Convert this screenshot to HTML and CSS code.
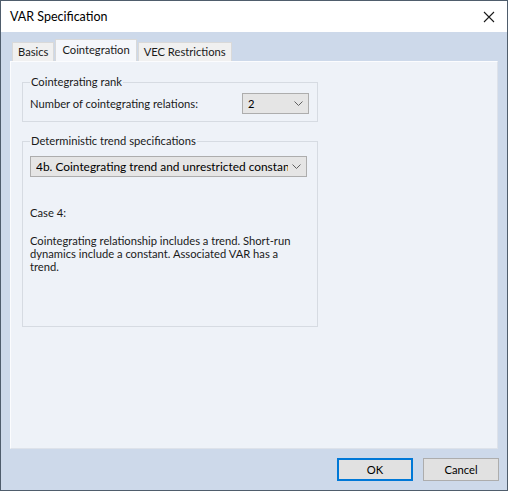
FILE: index.html
```html
<!DOCTYPE html>
<html>
<head>
<meta charset="utf-8">
<link rel="stylesheet" href="styles.css">
</head>
<body>
<div class="window">
  <div class="titlebar">
    <span class="title">VAR Specification</span>
    <svg class="close" width="12" height="12" viewBox="0 0 12 12"><path d="M1 1 L11 11 M11 1 L1 11" stroke="#1a1a1a" stroke-width="1.1" fill="none"/></svg>
  </div>
  <div class="client">
    <div class="tabs">
      <div class="tab">Basics</div>
      <div class="tab active">Cointegration</div>
      <div class="tab">VEC Restrictions</div>
    </div>
    <div class="panel">
      <fieldset class="group rank">
        <legend>Cointegrating rank</legend>
        <div class="row">
          <span>Number of cointegrating relations:</span>
          <div class="combo small"><span class="val">2</span><svg class="chev" width="9" height="5" viewBox="0 0 9 5"><path d="M0.5 0.5 L4.5 4.5 L8.5 0.5" stroke="#606060" fill="none"/></svg></div>
        </div>
      </fieldset>
      <fieldset class="group trend">
        <legend>Deterministic trend specifications</legend>
        <div class="combo wide"><span class="val">4b. Cointegrating trend and unrestricted constant</span><svg class="chev" width="9" height="5" viewBox="0 0 9 5"><path d="M0.5 0.5 L4.5 4.5 L8.5 0.5" stroke="#606060" fill="none"/></svg></div>
        <p class="case">Case 4:</p>
        <p class="desc">Cointegrating relationship includes a trend. Short-run dynamics include a constant. Associated VAR has a trend.</p>
      </fieldset>
    </div>
    <div class="buttons">
      <div class="btn default">OK</div>
      <div class="btn">Cancel</div>
    </div>
  </div>
</div>
</body>
</html>
```

FILE: styles.css
```css
html, body {
  margin: 0;
  padding: 0;
}
body {
  width: 508px;
  height: 491px;
  font-family: Lato, "Noto Sans", sans-serif;
  font-size: 11.2px;
  color: #1a1a1a;
}
.window {
  box-sizing: border-box;
  width: 508px;
  height: 491px;
  border: 1px solid #4f5d6c;
  display: flex;
  flex-direction: column;
  background: #cdd9ea;
}
.titlebar {
  height: 31px;
  background: #fff;
  display: flex;
  align-items: center;
  justify-content: space-between;
  padding: 0 12px 0 9px;
  flex: none;
}
.title {
  font-size: 12.5px;
  color: #000;
}
.close {
  display: block;
}
.client {
  flex: 1;
  display: flex;
  flex-direction: column;
  padding: 7px 9px 8px 9px;
}
.tabs {
  display: flex;
  align-items: flex-end;
  height: 22px;
  padding-left: 2px;
}
.tab {
  box-sizing: border-box;
  height: 19px;
  padding: 0 5px;
  line-height: 17px;
  background: #f0f0f0;
  border: 1px solid #d9d9d9;
  border-bottom: none;
  margin-right: 1px;
}
.tab.active {
  height: 22px;
  background: #f5f7fb;
  padding: 0 6px;
  line-height: 20px;
  position: relative;
  z-index: 1;
}
.panel {
  box-sizing: border-box;
  height: 388px;
  background: #eef2f8;
  border: 1px solid #fbfcfe;
  border-bottom-color: #dde2ea;
  border-right-color: #dde2ea;
  padding: 13px 11px;
  display: flex;
  flex-direction: column;
}
.group {
  margin: 0;
  width: 296px;
  box-sizing: border-box;
  border: 1px solid #d6dbe2;
  border-radius: 0;
  min-width: 0;
}
.group legend {
  padding: 0 1px;
  margin-left: 0;
  line-height: 14px;
}
.rank {
  padding: 4px 8px 7px 7px;
}
.row {
  display: flex;
  align-items: center;
  justify-content: space-between;
}
.trend {
  margin-top: 12px;
  height: 193px;
  padding: 8px 10px 0 7px;
}
.combo {
  box-sizing: border-box;
  height: 21px;
  background: #e5e5e5;
  border: 1px solid #adadad;
  display: flex;
  align-items: center;
  padding-left: 5px;
  padding-right: 5px;
  color: #000;
}
.combo .val {
  flex: 1;
  white-space: nowrap;
  overflow: hidden;
  min-width: 0;
}
.combo .chev {
  flex: none;
  margin-left: 4px;
}
.combo.small {
  width: 67px;
}
.combo.wide {
  width: 277px;
  font-size: 11.9px;
}
.case {
  margin: 29px 0 0 0;
  line-height: 14px;
}
.desc {
  margin: 14px 0 0 0;
  line-height: 13px;
  width: 274px;
}
.buttons {
  display: flex;
  justify-content: flex-end;
  gap: 10px;
  margin-top: 9px;
  margin-right: -1px;
}
.btn {
  box-sizing: border-box;
  width: 76px;
  height: 23px;
  border: 1px solid #adadad;
  background: #e1e1e1;
  text-align: center;
  line-height: 21px;
  color: #000;
}
.btn.default {
  border: 2px solid #0078d7;
  line-height: 19px;
}
```
